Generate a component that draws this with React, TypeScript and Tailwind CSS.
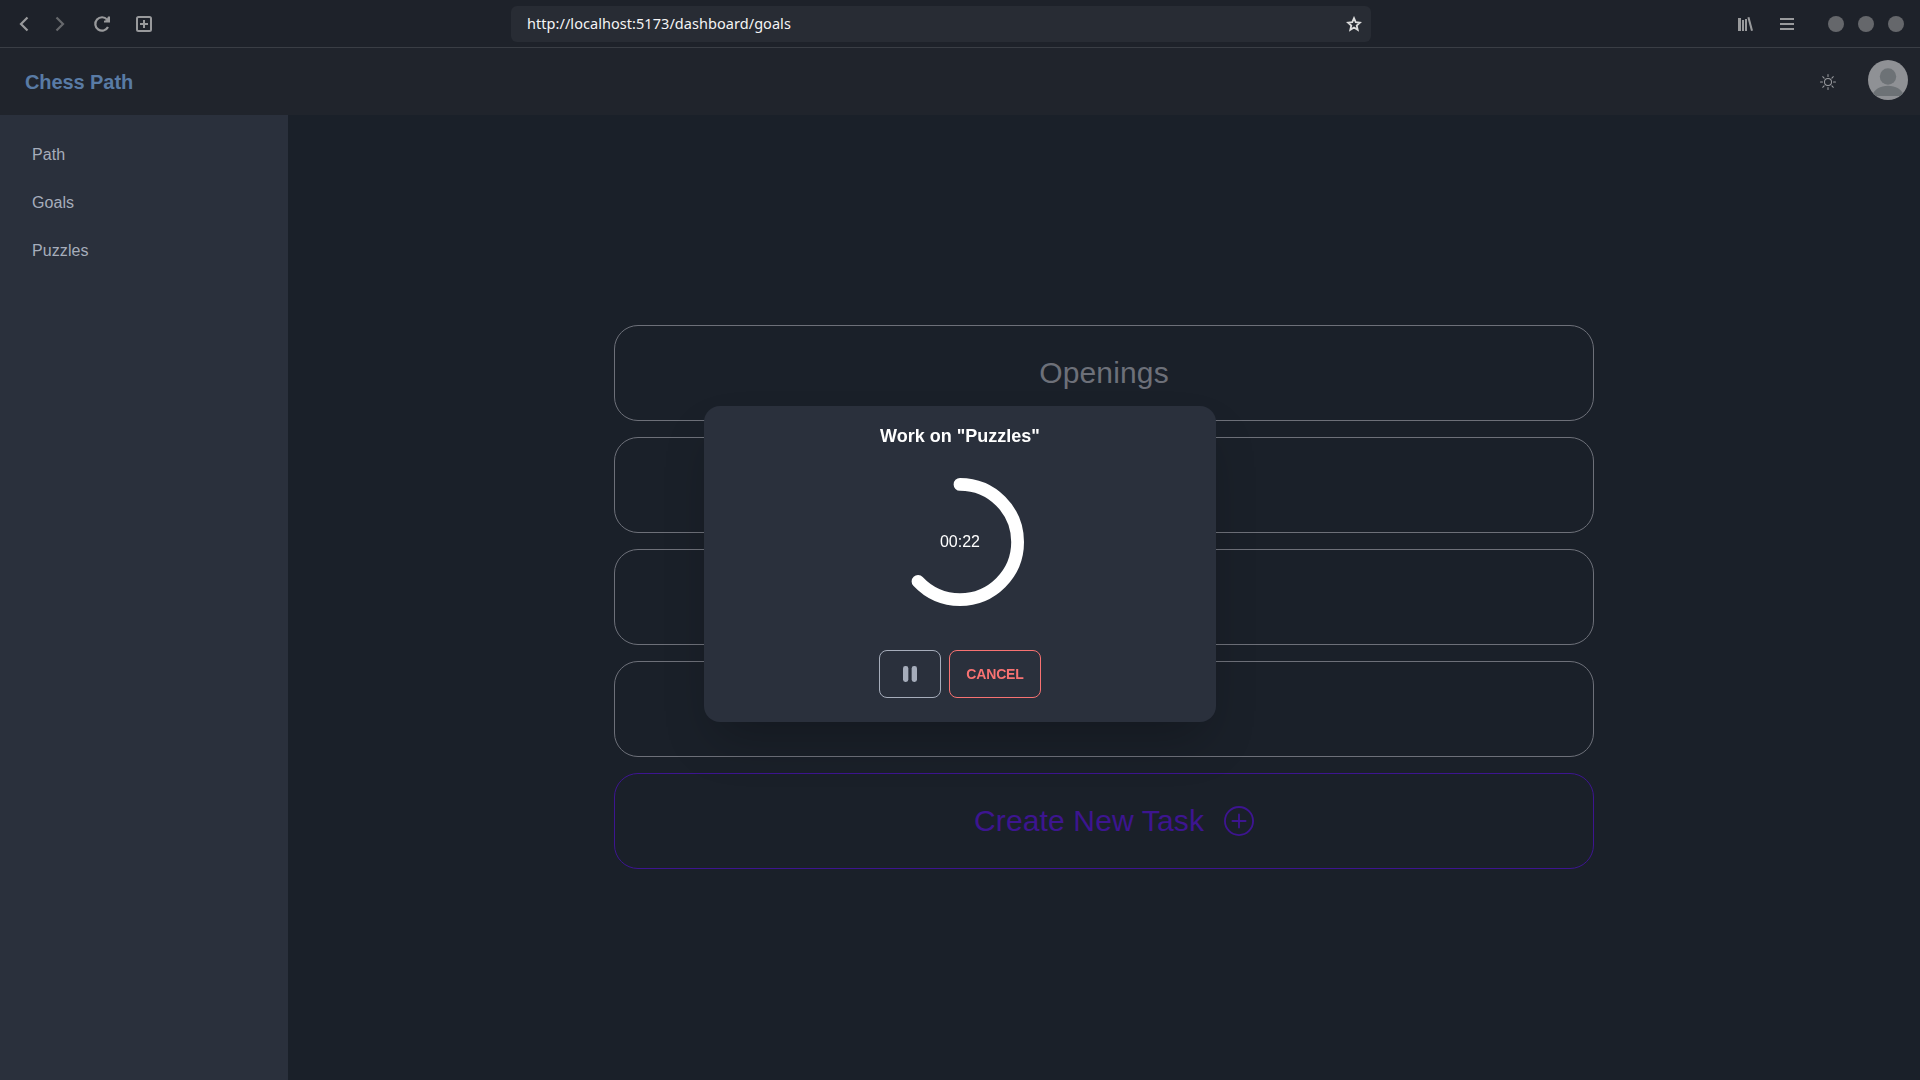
import React from "react";
import { BsPlusCircle, BsSun } from "react-icons/bs";

const navItems = ["Path", "Goals", "Puzzles"];
const tasks = ["Openings", "", "", ""];

function BrowserBar() {
  return (
    <div className="flex h-12 shrink-0 items-center border-b border-[#3a3e45] bg-[#1e222a]">
      <div className="flex w-[511px] items-center text-[#999a9c]">
        <svg className="ml-[18px]" width="12" height="16" viewBox="0 0 12 16" fill="none" stroke="currentColor" strokeWidth="2.200">
          <path d="M9.500 1.500 3 8l6.500 6.500" />
        </svg>
        <svg className="ml-[24px] text-[#66686c]" width="12" height="16" viewBox="0 0 12 16" fill="none" stroke="currentColor" strokeWidth="2.200">
          <path d="M2.500 1.500 9 8l-6.500 6.500" />
        </svg>
        <svg className="ml-[27px]" width="18" height="18" viewBox="0 0 18 18" fill="none" stroke="currentColor" strokeWidth="2.200">
          <path d="M15 12a6.700 6.700 0 1 1-.9-7.400" />
          <path d="M17 1.500v6h-6V5.800l2.500-.8L15 1.500z" fill="currentColor" stroke="none" />
        </svg>
        <svg className="ml-[24px]" width="18" height="18" viewBox="0 0 18 18" fill="none" stroke="currentColor" strokeWidth="2">
          <rect x="2" y="2" width="14" height="14" rx="1.5" />
          <path d="M9 5v8M5 9h8" />
        </svg>
      </div>
      <div className="flex h-9 w-[860px] items-center justify-between rounded-md bg-[#282c34] pr-[9px] pl-4">
        <span className="pb-0.5 font-['Noto_Sans','Open_Sans',sans-serif] text-[14.5px] leading-5 tracking-[0.05px] text-[#f4f4f4]">
          http://localhost:5173/dashboard/goals
        </span>
        <svg width="16" height="16" viewBox="0 0 16 16" fill="none" stroke="#dcdcdc" strokeWidth="1.800">
          <path d="m8 2.200 1.700 4 4.300.4-3.300 2.900 1 4.300L8 11.500l-3.700 2.300 1-4.300L2 6.600l4.300-.4z" />
        </svg>
      </div>
      <div className="ml-auto flex items-center pr-4 text-[#999a9c]">
        <svg width="16" height="16" viewBox="0 0 16 16" fill="currentColor">
          <path d="M1 2h3v13H1zM5 4h2v11H5zM8 3h2v12H8z" />
          <path d="m10.400 1.500 2-.5L16 14.500l-2 .5z" />
        </svg>
        <svg className="ml-[27px]" width="14" height="12" viewBox="0 0 14 12" fill="currentColor">
          <path d="M0 0h14v2H0zM0 5h14v2H0zM0 10h14v2H0z" />
        </svg>
        <div className="ml-[34px] flex gap-[14px]">
          <span className="size-4 rounded-full bg-[#65676b]" />
          <span className="size-4 rounded-full bg-[#65676b]" />
          <span className="size-4 rounded-full bg-[#65676b]" />
        </div>
      </div>
    </div>
  );
}

function Avatar() {
  return (
    <svg width="40" height="40" viewBox="0 0 40 40" className="rounded-full">
      <rect width="40" height="40" fill="#8f9195" />
      <circle cx="20" cy="16.500" r="8.200" fill="#6d7276" />
      <path d="M4 36c2-7 8.500-10.300 16-10.300S34 29 36 36z" fill="#6d7276" />
    </svg>
  );
}

function TimerRing() {
  return (
    <div className="grid size-32 place-items-center">
      <svg className="col-start-1 row-start-1" width="128" height="128" viewBox="0 0 128 128" fill="none">
        <circle
          cx="64"
          cy="64"
          r="57.600"
          stroke="#fff"
          strokeWidth="12.800"
          strokeLinecap="round"
          pathLength="100"
          strokeDasharray="63 100"
          transform="rotate(-90 64 64)"
        />
      </svg>
      <span className="col-start-1 row-start-1 text-base text-white">00:22</span>
    </div>
  );
}

function TimerModal() {
  return (
    <div className="fixed inset-0 flex items-center justify-center pt-12">
      <div className="flex h-[316px] w-lg flex-col items-center rounded-2xl bg-[#2a303c] pt-4 shadow-2xl">
        <h3 className="text-lg leading-7 font-bold text-white">Work on "Puzzles"</h3>
        <div className="mt-7">
          <TimerRing />
        </div>
        <div className="mt-11 flex gap-2">
          <button className="flex h-12 w-[62px] items-center justify-center rounded-lg border border-[#a6adbb]">
            <svg width="14" height="16" viewBox="0 0 14 16" fill="#a6adbb">
              <rect width="5.330" height="16" rx="2.400" />
              <rect x="8.670" width="5.330" height="16" rx="2.400" />
            </svg>
          </button>
          <button className="h-12 w-[92px] rounded-lg border border-[#f87272] text-sm font-semibold tracking-[-0.15px] text-[#f87272]">
            CANCEL
          </button>
        </div>
      </div>
    </div>
  );
}

export default function App() {
  return (
    <div className="flex h-screen flex-col overflow-hidden bg-[#1a2029] font-['Liberation_Sans',Arial,sans-serif]">
      <BrowserBar />
      <header className="flex h-[67px] shrink-0 items-center justify-between bg-[#20242c] pr-3 pl-[25px]">
        <h1 className="text-xl font-bold tracking-[-0.08px] text-[#597ba5]">Chess Path</h1>
        <div className="flex items-center gap-8">
          <BsSun className="text-[#9b9da1]" size={16} />
          <div className="-mt-[3px]">
            <Avatar />
          </div>
        </div>
      </header>
      <div className="flex min-h-0 flex-1">
        <nav className="flex w-72 shrink-0 flex-col bg-[#2a303c] px-8 pt-4 text-base tracking-[0.08px] text-[#a6adbb]">
          {navItems.map((item) => (
            <a key={item} className="flex h-12 items-center">
              {item}
            </a>
          ))}
        </nav>
        <main className="flex flex-1 flex-col items-center gap-4 pt-[210px]">
          {tasks.map((task, i) => (
            <div
              key={i}
              className="flex h-24 w-[980px] items-center justify-center rounded-3xl border border-[#6d7079] text-3xl tracking-[0.15px] text-[#6d7079]"
            >
              {task}
            </div>
          ))}
          <div className="flex h-24 w-[980px] items-center justify-center rounded-3xl border border-[#3d1590] pl-5 text-3xl tracking-[0.15px] text-[#3d1590]">
            Create New Task
            <BsPlusCircle className="ml-5" size={30} />
          </div>
        </main>
      </div>
      <TimerModal />
    </div>
  );
}
